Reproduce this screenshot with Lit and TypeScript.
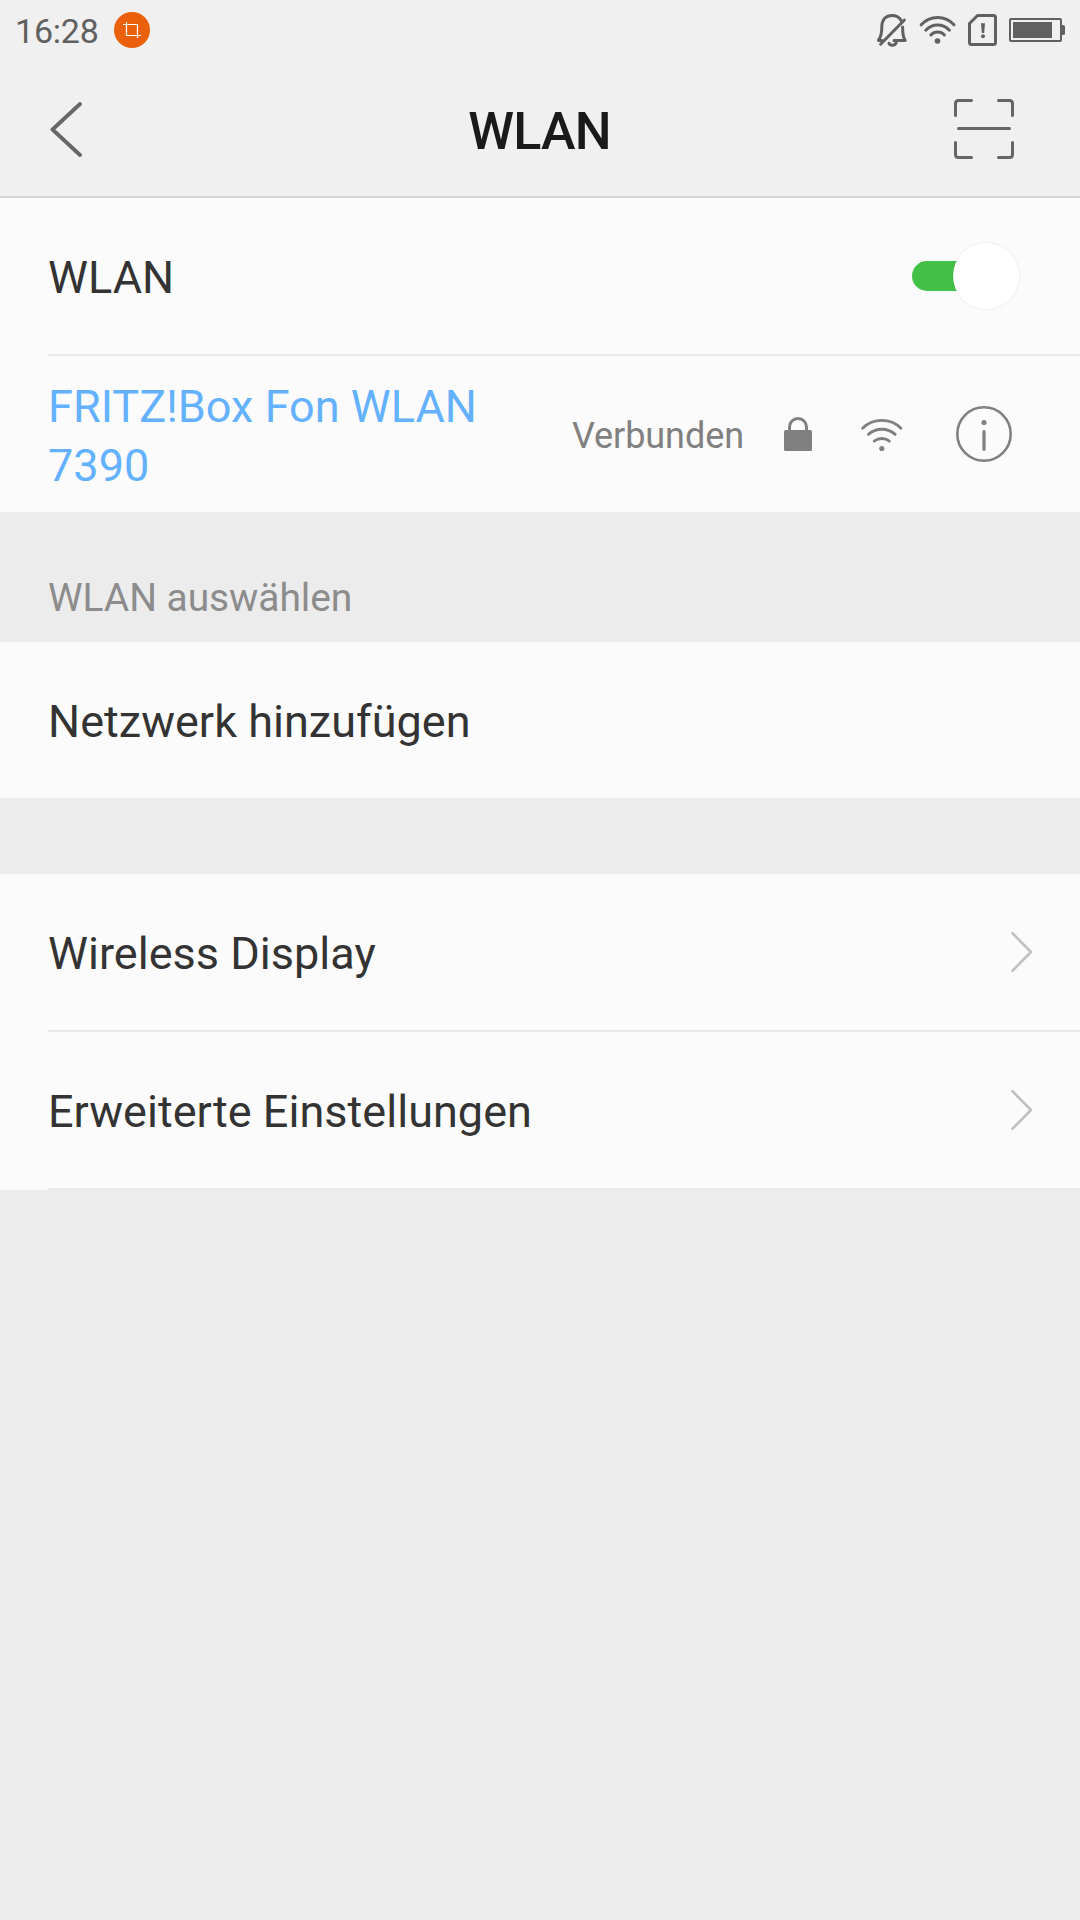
import { LitElement, html, css } from "lit";
import { customElement, state } from "lit/decorators.js";

const chevron = html`<svg class="chevron" width="24" height="44" viewBox="1010 930 24 44">
  <path d="M1012.4 933.2L1031 952L1012.4 970.8" />
</svg>`;

@customElement("app-root")
export class AppRoot extends LitElement {
  static styles = css`
    :host {
      display: block;
      font-family: Roboto, "Liberation Sans", sans-serif;
      color: #333;
    }
    .screen {
      width: 1080px;
      height: 1920px;
      background: #ececec;
      overflow: hidden;
    }
    svg {
      display: block;
      flex: none;
      fill: none;
      stroke-linecap: round;
      stroke-linejoin: round;
    }
    .status {
      height: 60px;
      box-sizing: border-box;
      padding: 0 15px 0 15px;
      background: #f0f0f0;
      display: flex;
      align-items: center;
      color: #606060;
    }
    .time {
      font-size: 34px;
      line-height: 40px;
      width: 99px;
      padding-top: 1px;
      box-sizing: border-box;
      letter-spacing: -0.2px;
    }
    .tray {
      margin-left: auto;
      display: flex;
      align-items: center;
      gap: 10px;
      stroke: #606060;
      stroke-width: 3;
    }
    .solid {
      fill: #606060;
      stroke: none;
    }
    .header {
      height: 138px;
      box-sizing: border-box;
      border-bottom: 2px solid #d5d5d5;
      background: #f0f0f0;
      display: grid;
      grid-template-columns: 36px 1fr 64px;
      align-items: center;
      padding: 0 64px 0 48px;
    }
    .back {
      stroke: #666;
      stroke-width: 3.8;
      margin-top: 3px;
    }
    .title {
      margin: 0;
      padding: 7px 0 0 43px;
      text-align: center;
      font-size: 52px;
      line-height: 60px;
      font-weight: 500;
      letter-spacing: -0.8px;
      color: #1a1a1a;
    }
    .scan {
      stroke: #666;
      stroke-width: 3;
      margin-top: 2px;
    }
    .group {
      background: #fbfbfb;
    }
    .row {
      height: 156px;
      box-sizing: border-box;
      padding: 0 46px 0 48px;
      display: flex;
      align-items: center;
      justify-content: space-between;
    }
    .label {
      font-size: 45px;
      line-height: 59px;
      padding-top: 3px;
      letter-spacing: 0.03px;
    }
    .divider {
      height: 2px;
      margin-left: 48px;
      background: #e9e9e9;
    }
    .network {
      color: #64b1ff;
      width: 480px;
    }
    .details {
      display: flex;
      align-items: center;
      margin-right: 20px;
    }
    .state {
      font-size: 36px;
      line-height: 42px;
      color: #808080;
      padding-top: 3px;
      margin-right: 39px;
      letter-spacing: -0.06px;
    }
    .lock {
      margin-right: 47px;
    }
    .signal {
      margin-right: 50px;
    }
    .grey {
      stroke: #808080;
    }
    .greyfill {
      fill: #808080;
    }
    .section {
      height: 130px;
      box-sizing: border-box;
      padding: 63px 48px 0;
      font-size: 39px;
      line-height: 46px;
      letter-spacing: -0.08px;
      color: #8c8c8c;
    }
    .gap {
      height: 76px;
    }
    .chevron {
      stroke: #c0c0c0;
      stroke-width: 2.6;
    }
    .switch {
      width: 106px;
      height: 67px;
      margin-right: 16px;
      padding: 0;
      display: flex;
      align-items: center;
    }
    .track {
      width: 60px;
      height: 30px;
      flex: none;
      border-radius: 15px;
      background: #43c046;
    }
    .knob {
      width: 66px;
      height: 66px;
      flex: none;
      margin-left: -19.5px;
      border-radius: 50%;
      background: #fff;
      box-shadow: 0 0 2px 1px rgba(0, 0, 0, 0.05);
    }
  `;

  @state() private networkName = "FRITZ!Box Fon WLAN 7390";

  private renderStatus() {
    return html`<div class="status">
      <div class="time">16:28</div>
      <svg width="36" height="36" viewBox="114 12 36 36">
        <circle cx="132" cy="30" r="18" fill="#eb600c" />
        <path d="M123 24.5H137.5V38M126.5 22V35.5H141" stroke="#fff" stroke-width="1.2" stroke-linecap="butt" stroke-linejoin="miter" />
      </svg>
      <div class="tray">
        <svg width="32" height="36" viewBox="875 12 32 36">
          <path d="M878.8 39.4C881.4 36.4 881.8 33 881.8 27C881.8 19.4 886 15.4 892 15.4C896 15.4 899.4 17.2 901 20.4" />
          <path d="M902.6 27C902.6 34 902.8 37.2 905.2 40.4H894" />
          <path d="M878.6 40.4H882M880.6 44.2L904.4 20" />
          <path d="M889 43.2C890 46 895.2 46 896.2 42.6" />
        </svg>
        <svg width="40" height="36" viewBox="917 12 40 36">
          <path d="M921.2 24.8A22 22 0 0 1 954 24.8M925.8 30.2A15.8 15.8 0 0 1 949.4 30.2M930.8 35A9.4 9.4 0 0 1 944.4 35" />
          <circle class="solid" cx="937.5" cy="41" r="2.8" />
        </svg>
        <svg width="32" height="36" viewBox="967 12 32 36">
          <path d="M977.5 15.5H993.5Q995.5 15.5 995.5 17.5V42.5Q995.5 44.5 993.5 44.5H971.5Q969.5 44.5 969.5 42.5V23.5Z" />
          <path class="solid" d="M981 23.2H985L984.2 33H981.8Z" />
          <circle class="solid" cx="983" cy="36.2" r="2" />
        </svg>
        <svg width="56" height="36" viewBox="1009 12 56 36">
          <rect x="1010" y="19" width="51" height="22" rx="1" stroke-width="2" />
          <rect class="solid" x="1013" y="22" width="39" height="16" />
          <path class="solid" d="M1061 25H1063.4Q1065 25 1065 26.6V33.4Q1065 35 1063.4 35H1061Z" />
        </svg>
      </div>
    </div>`;
  }

  private renderHeader() {
    return html`<div class="header">
      <svg class="back" width="36" height="56" viewBox="48 102 36 56">
        <path d="M80 104L52.5 129.5L80 155" />
      </svg>
      <h1 class="title">WLAN</h1>
      <svg class="scan" width="64" height="64" viewBox="952 97 64 64">
        <path d="M955.5 115.5V103.5Q955.5 100.5 958.5 100.5H971.5M998.5 100.5H1009.5Q1012.5 100.5 1012.5 103.5V115.5M1012.5 142.5V154.5Q1012.5 157.5 1009.5 157.5H998.5M971.5 157.5H958.5Q955.5 157.5 955.5 154.5V142.5M958.5 128.5H1009.5" />
      </svg>
    </div>`;
  }

  render() {
    return html`<div class="screen">
      ${this.renderStatus()} ${this.renderHeader()}
      <div class="group">
        <div class="row">
          <div class="label">WLAN</div>
          <div class="switch">
            <div class="track"></div>
            <div class="knob"></div>
          </div>
        </div>
        <div class="divider"></div>
        <div class="row">
          <div class="label network">${this.networkName}</div>
          <div class="details">
            <div class="state">Verbunden</div>
            <svg class="lock" width="30" height="36" viewBox="783 416 30 36">
              <rect class="greyfill" x="784" y="430" width="28" height="21" rx="1.5" />
              <path class="grey" stroke-width="3" stroke-linecap="butt" d="M789.5 431V427A8.5 8.5 0 0 1 806.5 427V431" />
            </svg>
            <svg class="signal" width="44" height="36" viewBox="860 416 44 36">
              <path class="grey" stroke-width="2.8" d="M862.6 428.2A27.5 27.5 0 0 1 901 428.2M868.4 434.4A20 20 0 0 1 895.2 434.4M874.2 441.2A12 12 0 0 1 889.4 441.2" />
              <circle class="greyfill" cx="881.8" cy="448.5" r="2.6" />
            </svg>
            <svg width="60" height="60" viewBox="954 404 60 60">
              <circle class="grey" stroke-width="2.6" cx="984" cy="434" r="26.7" />
              <circle class="greyfill" cx="984" cy="422.5" r="2.6" />
              <path class="grey" stroke-width="3.2" d="M984 431.7V449.3" />
            </svg>
          </div>
        </div>
      </div>
      <div class="section">WLAN auswählen</div>
      <div class="group">
        <div class="row"><div class="label">Netzwerk hinzufügen</div></div>
      </div>
      <div class="gap"></div>
      <div class="group">
        <div class="row"><div class="label">Wireless Display</div>${chevron}</div>
        <div class="divider"></div>
        <div class="row"><div class="label">Erweiterte Einstellungen</div>${chevron}</div>
        <div class="divider"></div>
      </div>
    </div>`;
  }
}
